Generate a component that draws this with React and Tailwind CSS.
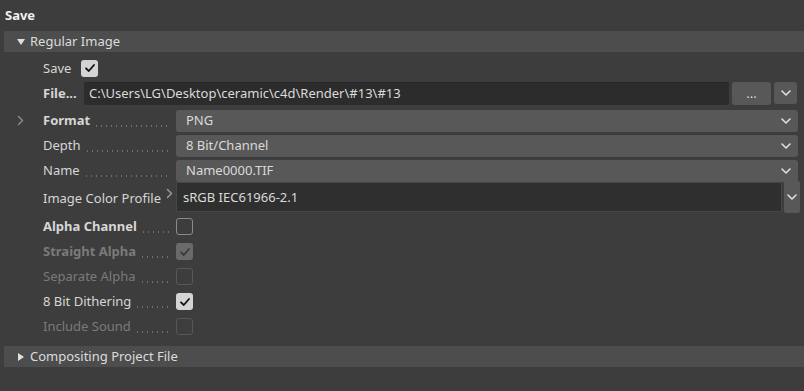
import React from "react";

const Check = ({ color = "#111" }) => (
  <svg width="12" height="12" viewBox="0 0 12 12" fill="none">
    <path d="M2 6.3 L4.8 9 L10 3" stroke={color} strokeWidth="1.8" strokeLinecap="round" strokeLinejoin="round" />
  </svg>
);

const ChevDown = ({ color = "#e0e0e0" }) => (
  <svg width="12" height="8" viewBox="0 0 12 8" fill="none">
    <path d="M2 2 L6 6 L10 2" stroke={color} strokeWidth="1.6" strokeLinecap="round" strokeLinejoin="round" />
  </svg>
);

const ChevRight = ({ color = "#8a8a8a" }) => (
  <svg width="7" height="11" viewBox="0 0 7 11" fill="none">
    <path d="M1.5 1.5 L5.5 5.5 L1.5 9.5" stroke={color} strokeWidth="1.5" strokeLinecap="round" strokeLinejoin="round" />
  </svg>
);

const Dots = () => (
  <span className="flex-1 self-end mb-[6px] ml-[4px] mr-[3px] h-[2px] bg-[radial-gradient(circle,#6f6f6f_0.7px,transparent_1px)] bg-[length:5px_2px] bg-repeat-x" />
);

const Box = ({ state }) => {
  if (state === "on")
    return (
      <span className="w-[17px] h-[17px] rounded-[3px] bg-[#d4d4d4] flex items-center justify-center">
        <Check />
      </span>
    );
  if (state === "dimon")
    return (
      <span className="w-[17px] h-[17px] rounded-[3px] bg-[#6a6a6a] flex items-center justify-center">
        <Check color="#3a3a3a" />
      </span>
    );
  if (state === "dimoff")
    return <span className="w-[17px] h-[17px] rounded-[3px] border border-[#585858]" />;
  return <span className="w-[17px] h-[17px] rounded-[3px] border border-[#8a8a8a]" />;
};

const Select = ({ value }) => (
  <div className="flex-1 h-[22px] rounded-[3px] bg-[#585858] flex items-center pl-[10px] pr-[6px] text-[#dadada]">
    <span className="flex-1">{value}</span>
    <ChevDown />
  </div>
);

const LabelRow = ({ label, bold, dim, arrow, children, dots = true }) => (
  <div className="h-[25px] flex items-center">
    <div className="w-[43px] flex items-center pl-[17px] shrink-0">{arrow && <ChevRight />}</div>
    <div className="w-[133px] flex items-center shrink-0 h-full pr-[3px]">
      <span
        className={
          (bold ? "font-bold " : "") +
          (dim ? "text-[#7a7a7a] " : "text-[#d6d6d6] ")
        }
      >
        {label}
      </span>
      {dots && <Dots />}
    </div>
    {children}
  </div>
);

export default function App() {
  return (
    <div
      className="w-[804px] h-[391px] bg-[#3d3d3d] text-[13px] leading-none overflow-hidden"
      style={{ fontFamily: "'Noto Sans', 'Open Sans', sans-serif" }}
    >
      <div className="h-[31px] flex items-center pl-[5px] font-bold text-[#f0f0f0]">Save</div>
      <div className="ml-[4px] h-[21px] bg-[#4d4d4d] flex items-center pl-[13px] text-[#dcdcdc]">
        <svg width="8" height="6" viewBox="0 0 8 6" className="mr-[5px]">
          <path d="M0 0 L8 0 L4 6 Z" fill="#e0e0e0" />
        </svg>
        Regular Image
      </div>
      <div className="h-[4px]" />
      <div className="h-[24px] flex items-center pl-[43px] text-[#d6d6d6]">
        <span className="w-[38px]">Save</span>
        <Box state="on" />
      </div>
      <div className="h-[26px] flex items-center pl-[43px] pr-[7px] text-[#d6d6d6]">
        <span className="w-[41px] font-bold">File...</span>
        <div className="flex-1 h-[23px] bg-[#2c2c2c] border-t border-[#262626] rounded-[2px] flex items-center pl-[5px] text-[#dadada]">
          C:\Users\LG\Desktop\ceramic\c4d\Render\#13\#13
        </div>
        <div className="ml-[3px] w-[39px] h-[23px] rounded-[3px] bg-[#585858] flex items-end justify-center pb-[5px] text-[#dadada]">
          ...
        </div>
        <div className="ml-[3px] w-[23px] h-[22px] rounded-[3px] bg-[#585858] flex items-center justify-center">
          <ChevDown />
        </div>
      </div>
      <div className="h-[2px]" />
      <div className="pr-[6px]">
        <LabelRow label="Format" bold arrow>
          <Select value="PNG" />
        </LabelRow>
        <LabelRow label="Depth">
          <Select value="8 Bit/Channel" />
        </LabelRow>
        <LabelRow label="Name">
          <Select value="Name0000.TIF" />
        </LabelRow>
      </div>
      <div className="h-[31px] flex items-start pl-[43px] pr-[4px]">
        <div className="w-[133px] h-[30px] flex items-center shrink-0 relative">
          <span className="text-[#d6d6d6]">Image Color Profile</span>
          <span className="absolute right-[3px] top-[5px]">
            <ChevRight color="#9a9a9a" />
          </span>
        </div>
        <div className="flex-1 h-[30px] mt-[-1px] bg-[#2f2f2f] border border-[#464646] flex items-center pl-[6px] text-[#dadada]">
          sRGB IEC61966-2.1
        </div>
        <div className="ml-[2px] w-[16px] h-[32px] mt-[-2px] bg-[#585858] rounded-[2px] flex items-center justify-center">
          <ChevDown />
        </div>
      </div>
      <LabelRow label="Alpha Channel" bold>
        <Box state="off" />
      </LabelRow>
      <LabelRow label="Straight Alpha" bold dim>
        <Box state="dimon" />
      </LabelRow>
      <LabelRow label="Separate Alpha" dim>
        <Box state="dimoff" />
      </LabelRow>
      <LabelRow label="8 Bit Dithering">
        <Box state="on" />
      </LabelRow>
      <LabelRow label="Include Sound" dim>
        <Box state="dimoff" />
      </LabelRow>
      <div className="h-[7px]" />
      <div className="ml-[4px] h-[21px] bg-[#4d4d4d] flex items-center pl-[14px] text-[#dcdcdc]">
        <svg width="6" height="8" viewBox="0 0 6 8" className="mr-[6px]">
          <path d="M0 0 L6 4 L0 8 Z" fill="#e0e0e0" />
        </svg>
        Compositing Project File
      </div>
    </div>
  );
}
